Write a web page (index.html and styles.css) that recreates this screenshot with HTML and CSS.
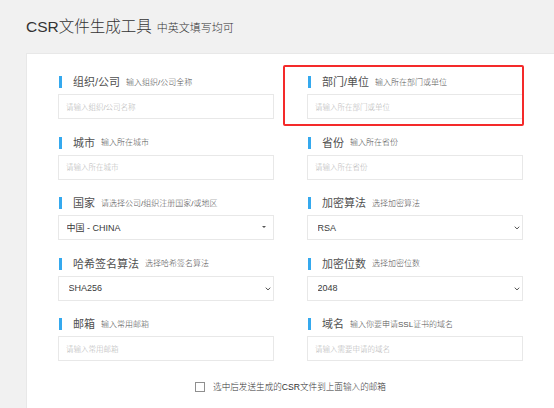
FILE: index.html
```html
<!DOCTYPE html>
<html lang="zh-CN">
<head>
<meta charset="utf-8">
<title>CSR文件生成工具</title>
<link rel="stylesheet" href="styles.css">
</head>
<body>
<header class="page-head">
  <h1 class="title"><span class="latin">CSR</span>文件生成工具<small class="subtitle">中英文填写均可</small></h1>
</header>
<main class="card">
  <form class="form-grid">
    <div class="field">
      <div class="label"><span class="name">组织/公司</span><span class="hint">输入组织/公司全称</span></div>
      <input class="control" type="text" placeholder="请输入组织/公司名称">
    </div>
    <div class="field">
      <div class="label"><span class="name">部门/单位</span><span class="hint">输入所在部门或单位</span></div>
      <input class="control" type="text" placeholder="请输入所在部门或单位">
    </div>
    <div class="field">
      <div class="label"><span class="name">城市</span><span class="hint">输入所在城市</span></div>
      <input class="control" type="text" placeholder="请输入所在城市">
    </div>
    <div class="field">
      <div class="label"><span class="name">省份</span><span class="hint">输入所在省份</span></div>
      <input class="control" type="text" placeholder="请输入所在省份">
    </div>
    <div class="field">
      <div class="label"><span class="name">国家</span><span class="hint">请选择公司/组织注册国家/或地区</span></div>
      <div class="select-wrap">
        <select class="control select select-custom"><option>中国 - CHINA</option></select>
        <span class="caret"></span>
      </div>
    </div>
    <div class="field">
      <div class="label"><span class="name">加密算法</span><span class="hint">选择加密算法</span></div>
      <div class="select-wrap">
        <select class="control select"><option>RSA</option></select>
        <svg class="chev" width="6" height="4" viewBox="0 0 6 4"><path d="M0.7 0.7 L3 2.9 L5.3 0.7" fill="none" stroke="#555" stroke-width="1"/></svg>
      </div>
    </div>
    <div class="field">
      <div class="label"><span class="name">哈希签名算法</span><span class="hint">选择哈希签名算法</span></div>
      <div class="select-wrap">
        <select class="control select"><option>SHA256</option></select>
        <svg class="chev" width="6" height="4" viewBox="0 0 6 4"><path d="M0.7 0.7 L3 2.9 L5.3 0.7" fill="none" stroke="#555" stroke-width="1"/></svg>
      </div>
    </div>
    <div class="field">
      <div class="label"><span class="name">加密位数</span><span class="hint">选择加密位数</span></div>
      <div class="select-wrap">
        <select class="control select"><option>2048</option></select>
        <svg class="chev" width="6" height="4" viewBox="0 0 6 4"><path d="M0.7 0.7 L3 2.9 L5.3 0.7" fill="none" stroke="#555" stroke-width="1"/></svg>
      </div>
    </div>
    <div class="field">
      <div class="label"><span class="name">邮箱</span><span class="hint">输入常用邮箱</span></div>
      <input class="control" type="text" placeholder="请输入常用邮箱">
    </div>
    <div class="field">
      <div class="label"><span class="name">域名</span><span class="hint">输入你要申请<span class="latin">SSL</span>证书的域名</span></div>
      <input class="control" type="text" placeholder="请输入需要申请的域名">
    </div>
    <label class="send-row"><span class="check"></span><span class="send-text">选中后发送生成的<span class="latin">CSR</span>文件到上面输入的邮箱</span></label>
  </form>
</main>
<div class="highlight"></div>
</body>
</html>
```
FILE: styles.css
```css
html, body {
  margin: 0;
  padding: 0;
}
body {
  background: #f1f1f1;
  font-family: "Liberation Sans", "Noto Sans CJK SC", sans-serif;
  font-weight: 300;
  color: #333;
  width: 554px;
  height: 408px;
  overflow: hidden;
  position: relative;
}
.latin {
  font-weight: 400;
}
.page-head {
  height: 53px;
  display: flex;
  align-items: center;
  padding-left: 26px;
}
.title {
  margin: 0;
  font-size: 15.5px;
  font-weight: 300;
  line-height: 18px;
  color: #333;
  padding-top: 1px;
}
.subtitle {
  font-size: 11px;
  margin-left: 5px;
  color: #333;
}
.card {
  background: #fff;
  border: 1px solid #e8e8e8;
  border-right: none;
  margin-left: 26px;
  height: 360px;
  box-sizing: border-box;
  padding: 22px 0 0 31px;
}
.form-grid {
  display: grid;
  grid-template-columns: 216px 216px;
  column-gap: 33px;
  row-gap: 17.6px;
}
.field {
  display: flex;
  flex-direction: column;
}
.label {
  display: flex;
  align-items: flex-end;
  height: 12px;
  margin-bottom: 6px;
}
.label::before {
  content: "";
  align-self: stretch;
  width: 3px;
  margin-left: 1px;
  margin-right: 11px;
  background: #35a9ee;
}
.name {
  font-size: 11px;
  line-height: 12px;
  font-weight: 400;
  color: #505050;
}
.hint {
  font-size: 8px;
  line-height: 8px;
  margin-left: 6px;
  margin-bottom: 1.5px;
  color: #555;
}
.control {
  box-sizing: border-box;
  width: 216px;
  height: 25px;
  margin: 0;
  border: 1px solid #e8e8e8;
  border-radius: 0;
  background: #fff;
  padding: 0 0 0 7px;
  font-family: "Liberation Sans", "Noto Sans CJK SC", sans-serif;
  font-weight: 400;
  font-size: 9px;
  color: #3a3a3a;
  outline: none;
}
.control::placeholder {
  font-size: 7.5px;
  font-weight: 300;
  color: #b5b5b5;
}
.select-wrap {
  position: relative;
}
.select {
  appearance: none;
  -webkit-appearance: none;
  padding-left: 9.5px;
}
.select-custom {
  padding-left: 7.5px;
}
.caret {
  position: absolute;
  right: 8px;
  top: 11px;
  width: 0;
  height: 0;
  border-left: 2.5px solid transparent;
  border-right: 2.5px solid transparent;
  border-top: 2.5px solid #555;
  pointer-events: none;
}
.chev {
  position: absolute;
  right: 3px;
  top: 11px;
  pointer-events: none;
}
.send-row {
  grid-column: 1 / -1;
  display: flex;
  justify-content: center;
  align-items: center;
  margin-top: 2px;
  height: 12px;
}
.check {
  box-sizing: border-box;
  width: 10px;
  height: 10px;
  border: 1px solid #8f8f8f;
  background: #fff;
  margin-right: 8px;
}
.send-text {
  font-size: 8.6px;
  line-height: 12px;
  color: #333;
}
.highlight {
  position: absolute;
  left: 283px;
  top: 65px;
  width: 241px;
  height: 61px;
  box-sizing: border-box;
  border: 2px solid #f42a2a;
  border-radius: 2px;
  pointer-events: none;
}
```
